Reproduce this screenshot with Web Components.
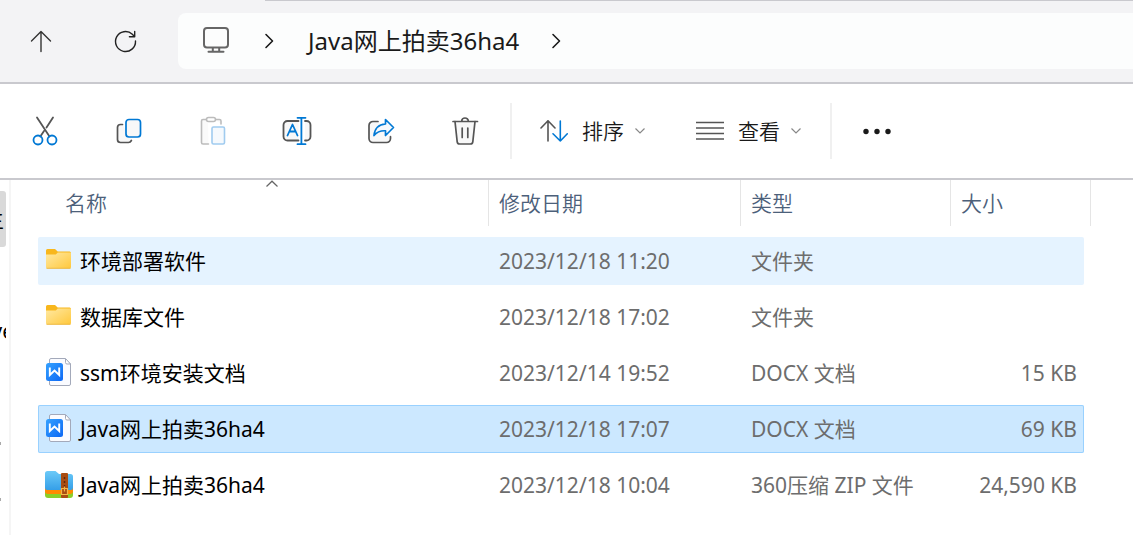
<!DOCTYPE html>
<html lang="zh-CN">
<head>
<meta charset="UTF-8">
<meta name="viewport" content="width=device-width, initial-scale=1">
<title>Java网上拍卖36ha4</title>
<style>
  body {
    margin: 0;
    background: #fff;
    color: #1a1a1a;
    font: 21px/28px "Noto Sans", "Noto Sans CJK SC", sans-serif;
  }
</style>
</head>
<body>
<file-explorer>
  <address-bar slot="address" folder="Java网上拍卖36ha4"></address-bar>
  <command-bar slot="commands"></command-bar>
  <nav-pane slot="nav"></nav-pane>
  <file-list slot="files"></file-list>
</file-explorer>

<script>
// Iconos: caja de dibujo + contenido SVG
const ICONS = {
  up: [32, 32, `<g fill="none" stroke="#333" stroke-width="1.4" stroke-linecap="round" stroke-linejoin="round"><path d="M16 26.500V6.500M6.500 16 16 6.500l9.500 9.500"/></g>`],
  refresh: [32, 32, `<g fill="none" stroke="#222" stroke-width="1.4" stroke-linecap="round" stroke-linejoin="round"><path d="M26.500 16A10 10 0 1 1 23.300 9.200L25.500 11.500M25.700 6.500v5.300h-5.300"/></g>`],
  pc: [32, 32, `<g fill="none" stroke="#666" stroke-width="2" stroke-linecap="round" stroke-linejoin="round"><rect x="4" y="3" width="24" height="19.500" rx="3"/><path d="M12.800 23v3.500M19.200 23v3.500M8.500 26.700h15"/></g>`],
  next: [16, 20, `<path d="m4 3.500 6.500 6.500L4 16.500" fill="none" stroke="#1a1a1a" stroke-width="1.6" stroke-linecap="round" stroke-linejoin="round"/>`],
  cut: [32, 32, `<g fill="none" stroke-width="1.8" stroke-linecap="round"><path d="M8 2.500 20.500 21.500M24 2.500l-6.500 10M15 16l-3.700 5.500" stroke="#555"/><circle cx="9" cy="25" r="4.500" stroke="#0078d4"/><circle cx="23" cy="25" r="4.500" stroke="#0078d4"/></g>`],
  copy: [32, 32, `<g stroke-width="1.7" stroke-linecap="round" fill="none"><path d="M9.500 9.500H7.500a3 3 0 0 0-3 3V24.500a3 3 0 0 0 3 3h8c1.600 0 2.300-.800 2.900-2" stroke="#555" fill="#f8f8f8"/><rect x="13" y="4.500" width="14.500" height="17.500" rx="3" stroke="#0078d4" fill="#f8f8f8"/></g>`],
  paste: [32, 32, `<g stroke-width="1.6" stroke-linecap="round" fill="none"><path d="M11 4.500H6a1.500 1.500 0 0 0-1.500 1.500v21.500A1.500 1.500 0 0 0 6 29h5.500M18 4.500h4.500A1.500 1.500 0 0 1 24 6v3" stroke="#bcbcbc" fill="#fafafa"/><rect x="9.500" y="2.500" width="9" height="4" rx="2" stroke="#bcbcbc" fill="#fff"/><rect x="15" y="12" width="12.500" height="17" rx="1.500" stroke="#a0cbef" fill="#f5f9fd"/></g>`],
  rename: [32, 32, `<g stroke-width="1.800" stroke-linecap="round" stroke-linejoin="round" fill="none"><path d="M17.500 6H6.500a4 4 0 0 0-4 4v11.500a4 4 0 0 0 4 4h11M24 6h1.500a4 4 0 0 1 4 4v11.500a4 4 0 0 1-4 4H24" stroke="#555" fill="#f8f8f8"/><path d="M20.400 3v26M16.500 2.800h8M16.500 29.200h8M6.500 20.500 11.500 9.500l5 11M8.300 16.500h6.400" stroke="#0078d4"/></g>`],
  share: [32, 32, `<g stroke-width="1.700" stroke-linecap="round" stroke-linejoin="round" fill="none"><path d="M13 6.500H8a4 4 0 0 0-4 4v13a4 4 0 0 0 4 4h13.500a4 4 0 0 0 4-4v-1.800" stroke="#555" fill="#f8f8f8"/><path d="M20.500 4.500 28.500 12.500l-8 8v-4.700c-5.300-.300-8.700 1.400-11.500 4.700.600-6.400 4.300-11 11.500-11.500z" stroke="#0078d4" fill="#f5f9fd"/></g>`],
  trash: [32, 32, `<g stroke="#555" stroke-width="1.700" stroke-linecap="round" stroke-linejoin="round" fill="none"><path d="m6 6.500 2.200 20.300a2.500 2.500 0 0 0 2.500 2.200h10.600a2.500 2.500 0 0 0 2.500-2.200L26 6.500" fill="#f8f8f8"/><path d="M4 6.500h24.500M12.700 6.300a3.300 3.300 0 0 1 6.600 0M13.200 13v9.500M18.800 13v9.500"/></g>`],
  sort: [28, 28, `<g stroke-width="1.600" stroke-linecap="round" stroke-linejoin="round" fill="none"><path d="M8 24V3.800M1 11l7-7.200 7 7.200" stroke="#555"/><path d="M20.300 4v20M13 16.800l7.300 7.200 7-7.200" stroke="#0078d4"/></g>`],
  view: [28, 28, `<path d="M0 5.500h28M0 11h28M0 16.500h28M0 22h28" stroke="#555" stroke-width="1.500"/>`],
  down: [12, 12, `<path d="m1.500 3.500 4.500 4.500 4.500-4.500" fill="none" stroke="#888" stroke-width="1.200"/>`],
  asc: [12, 8, `<path d="M.500 6.500 6 1.200l5.500 5.300" fill="none" stroke="#666" stroke-width="1.200"/>`],
  more: [28, 28, `<g fill="#1a1a1a"><circle cx="3" cy="14.500" r="2.700"/><circle cx="14" cy="14.500" r="2.700"/><circle cx="25" cy="14.500" r="2.700"/></g>`],
  folder: [28, 28, `<defs><linearGradient id="f" x1="0" y1="0" x2="1" y2="1"><stop offset="0" stop-color="#ffe9a3"/><stop offset="1" stop-color="#ffc83c"/></linearGradient></defs><g transform="translate(0 1)"><path d="M1 3.500A1.500 1.500 0 0 1 2.500 2H10l2.700 2.500h12A1.500 1.500 0 0 1 26 6v4H1z" fill="#f8b71d"/><path d="M1 7.500h9.800l2-2H26V20a1.500 1.500 0 0 1-1.500 1.500h-22A1.500 1.500 0 0 1 1 20z" fill="url(#f)"/><path d="M1.500 21.300h24" stroke="#e9b032" stroke-width=".800"/></g>`],
  docx: [28, 28, `<defs><linearGradient id="w" x1="0" y1="0" x2="1" y2="1"><stop offset="0" stop-color="#35a2ff"/><stop offset="1" stop-color="#0c67f5"/></linearGradient></defs><path d="M6 .500h14L25.500 6v20a1.500 1.500 0 0 1-1.500 1.500H6A1.500 1.500 0 0 1 4.500 26V2A1.500 1.500 0 0 1 6 .500z" fill="#fafbff" stroke="#a3a9ba"/><path d="M20.500.500V4.500A1.500 1.500 0 0 0 22 6h3.500z" fill="#fff" stroke="#a3a9ba"/><rect x="1" y="5" width="17" height="18" rx="2.500" fill="url(#w)"/><path d="M4.800 9.500v7.500l4.700-4.500 4.700 4.500V9.500" fill="none" stroke="#fff" stroke-width="1.900"/>`],
  zip: [28, 28, `<defs><linearGradient id="z" x1="0" y1="0" x2="0" y2="1"><stop offset="0" stop-color="#6ccaf8"/><stop offset="1" stop-color="#359fe8"/></linearGradient></defs><path d="M0 20h28v5a3 3 0 0 1-3 3H3a3 3 0 0 1-3-3z" fill="#8bcf28"/><path d="M0 18h28v3a3 3 0 0 1-3 3H3a3 3 0 0 1-3-3z" fill="#ff8a00"/><path d="M0 3.500A2.500 2.500 0 0 1 2.500 1h8L14 4h11.500A2.500 2.500 0 0 1 28 6.500V18a2 2 0 0 1-2 2H2a2 2 0 0 1-2-2z" fill="url(#z)"/><rect x="16" y="3" width="7" height="25" rx="1" fill="#a94d12"/><path d="M19.500 7v10" stroke="#60280b" stroke-width="1.500" stroke-dasharray="2 2"/><path d="M16.500 18.500h6v6h-6zM19.500 16.500v5" fill="none" stroke="#f3b646" stroke-width="1.200"/>`]
};

function icon(name) {
  const [w, h, body] = ICONS[name];
  return `<svg width="${w}" height="${h}" viewBox="0 0 ${w} ${h}" aria-hidden="true">${body}</svg>`;
}

// <file-explorer> : ventana, con un slot por zona
class FileExplorer extends HTMLElement {
  constructor() {
    super();
    this.attachShadow({ mode: "open" }).innerHTML = `
      <style>
        :host { display: flex; flex-direction: column; min-height: 100vh; }
        main { display: flex; flex: 1; }
        slot[name="files"]::slotted(*) { flex: 1; min-width: 0; }
      </style>
      <slot name="address"></slot>
      <slot name="commands"></slot>
      <main>
        <slot name="nav"></slot>
        <slot name="files"></slot>
      </main>`;
  }
}

// <tool-button> : botón de icono; con el atributo menu lleva texto y flecha
class ToolButton extends HTMLElement {
  connectedCallback() {
    const title = this.getAttribute("title") ?? "";
    const menu = this.hasAttribute("menu");
    this.attachShadow({ mode: "open" }).innerHTML = `
      <style>
        :host { display: block; }
        button {
          display: flex; align-items: center; justify-content: center;
          width: 62px; height: 56px; padding: 0;
          border: none; border-radius: 8px;
          background: transparent;
          color: inherit; font: inherit;
        }
        button.menu { width: auto; padding: 0 14px; font-weight: 350; }
        button:hover { background: #0000000d; }
        button:disabled { background: transparent; }
        .label { margin: 0 10px 0 14px; }
        svg { flex: none; }
      </style>
      <button type="button" class="${menu ? "menu" : ""}" aria-label="${title}" ${this.hasAttribute("disabled") ? "disabled" : ""}>
        ${icon(this.getAttribute("icon"))}
        ${menu ? `<span class="label"><slot></slot></span>${icon("down")}` : ""}
      </button>`;
  }
}

// <address-bar> : subir, actualizar y ruta
class AddressBar extends HTMLElement {
  connectedCallback() {
    this.attachShadow({ mode: "open" }).innerHTML = `
      <style>
        :host {
          display: flex; flex-direction: column;
          background: #f3f3f5;
          border-bottom: 2px solid #c9c9ce;
        }
        .tab-edge { height: 1px; margin-left: 265px; background: #c9c9ce; }
        .row { display: flex; gap: 22px; padding: 12px 0 13px 10px; }
        nav {
          display: flex; align-items: center; flex: 1;
          height: 56px; padding-left: 22px; box-sizing: border-box;
          border-radius: 8px 0 0 8px;
          background: #fcfdfd;
          font-size: 24px;
        }
        svg { flex: none; }
        a { display: flex; color: inherit; text-decoration: none; white-space: nowrap; }
        a + svg { margin: 0 30px; }
      </style>
      <div class="tab-edge"></div>
      <div class="row">
        <tool-button icon="up" title="向上"></tool-button>
        <tool-button icon="refresh" title="刷新"></tool-button>
        <nav aria-label="路径">
          <a href="#pc" aria-label="此电脑">${icon("pc")}</a>
          ${icon("next")}
          <a href="#folder">${this.getAttribute("folder")}</a>
          ${icon("next")}
        </nav>
      </div>`;
  }
}

// <command-bar> : acciones sobre los archivos
class CommandBar extends HTMLElement {
  constructor() {
    super();
    this.attachShadow({ mode: "open" }).innerHTML = `
      <style>
        :host {
          display: flex; align-items: center; gap: 14px;
          padding: 19px 14px;
          border-bottom: 2px solid #c9c9ce;
        }
        .group { display: flex; gap: 22px; }
        .line { width: 2px; height: 56px; background: #f0f0f0; }
      </style>
      <div class="group">
        <tool-button icon="cut" title="剪切"></tool-button>
        <tool-button icon="copy" title="复制"></tool-button>
        <tool-button icon="paste" title="粘贴" disabled></tool-button>
        <tool-button icon="rename" title="重命名"></tool-button>
        <tool-button icon="share" title="共享"></tool-button>
        <tool-button icon="trash" title="删除"></tool-button>
      </div>
      <span class="line"></span>
      <div class="group">
        <tool-button icon="sort" title="排序" menu>排序</tool-button>
        <tool-button icon="view" title="查看" menu>查看</tool-button>
      </div>
      <span class="line"></span>
      <tool-button icon="more" title="查看更多"></tool-button>`;
  }
}

// <nav-pane> : panel lateral plegado, solo asoma el final de cada nombre
class NavPane extends HTMLElement {
  constructor() {
    super();
    this.attachShadow({ mode: "open" }).innerHTML = `
      <style>
        :host {
          display: block; width: 9px; padding-top: 11px;
          border-right: 2px solid #f5f5f5;
          color: #000;
        }
        ul {
          display: grid; grid-template-columns: 6px; width: 6px; overflow: hidden;
          margin: 0; padding: 0; list-style: none;
        }
        li {
          display: flex; align-items: center; justify-content: flex-end;
          height: 56px; padding-right: 2px; box-sizing: border-box;
          white-space: nowrap;
        }
        .current { background: #d9d9d9; border-radius: 0 3px 3px 0; }
        .long { margin-right: -10px; }
        .mark { justify-content: flex-start; }
        .mark::before { content: ""; width: 1px; height: 3px; background: #aaa; }
      </style>
      <ul>
        <li class="current">主</li>
        <li></li>
        <li class="long">ve</li>
        <li></li>
        <li class="mark"></li>
        <li class="mark"></li>
      </ul>`;
  }
}

const FILES = [
  { icon: "folder", name: "环境部署软件", date: "2023/12/18 11:20", type: "文件夹", size: "", state: "hover" },
  { icon: "folder", name: "数据库文件", date: "2023/12/18 17:02", type: "文件夹", size: "" },
  { icon: "docx", name: "ssm环境安装文档", date: "2023/12/14 19:52", type: "DOCX 文档", size: "15 KB" },
  { icon: "docx", name: "Java网上拍卖36ha4", date: "2023/12/18 17:07", type: "DOCX 文档", size: "69 KB", state: "selected" },
  { icon: "zip", name: "Java网上拍卖36ha4", date: "2023/12/18 10:04", type: "360压缩 ZIP 文件", size: "24,590 KB" }
];

// <file-list> : tabla de detalles
class FileList extends HTMLElement {
  constructor() {
    super();
    this.attachShadow({ mode: "open" });
  }

  connectedCallback() {
    this.render();
  }

  render() {
    this.shadowRoot.innerHTML = `
      <style>
        :host { display: block; padding: 0 42px 26px 27px; }
        table { display: block; }
        thead { display: block; margin-bottom: 11px; }
        tbody { display: grid; gap: 8px; margin-right: 7px; }
        tr {
          display: grid; align-items: center;
          grid-template-columns: minmax(0, 1fr) 252px 210px 133px;
          height: 48px; border-radius: 2px;
        }
        thead tr {
          grid-template-columns: minmax(0, 1fr) 252px 210px 140px;
          height: 46px;
        }
        th {
          height: 46px; padding: 0 10px; box-sizing: border-box;
          border-right: 1px solid #e5e5e5;
          color: #4c607a; font-weight: 350; line-height: 46px; text-align: left;
        }
        th:first-child {
          display: grid; grid-template-columns: 1fr auto 1fr;
          padding-left: 27px;
        }
        td { padding: 0 10px; color: #6d6d6d; white-space: nowrap; }
        td:first-child {
          display: flex; align-items: center; gap: 7px;
          padding: 0 7px; color: #000;
        }
        td:last-child { padding-right: 7px; text-align: right; }
        td svg { flex: none; margin-bottom: 2px; }
        .hover { background: #e5f3ff; }
        .selected { background: #cce8ff; box-shadow: inset 0 0 0 1px #99d1ff; }
      </style>
      <table>
        <thead>
          <tr>
            <th scope="col" aria-sort="ascending">名称${icon("asc")}</th>
            <th scope="col">修改日期</th>
            <th scope="col">类型</th>
            <th scope="col">大小</th>
          </tr>
        </thead>
        <tbody>
          ${FILES.map((f) => `
          <tr class="${f.state ?? ""}">
            <td>${icon(f.icon)}${f.name}</td>
            <td>${f.date}</td>
            <td>${f.type}</td>
            <td>${f.size}</td>
          </tr>`).join("")}
        </tbody>
      </table>`;
  }
}

customElements.define("tool-button", ToolButton);
customElements.define("address-bar", AddressBar);
customElements.define("command-bar", CommandBar);
customElements.define("nav-pane", NavPane);
customElements.define("file-list", FileList);
customElements.define("file-explorer", FileExplorer);
</script>
</body>
</html>
